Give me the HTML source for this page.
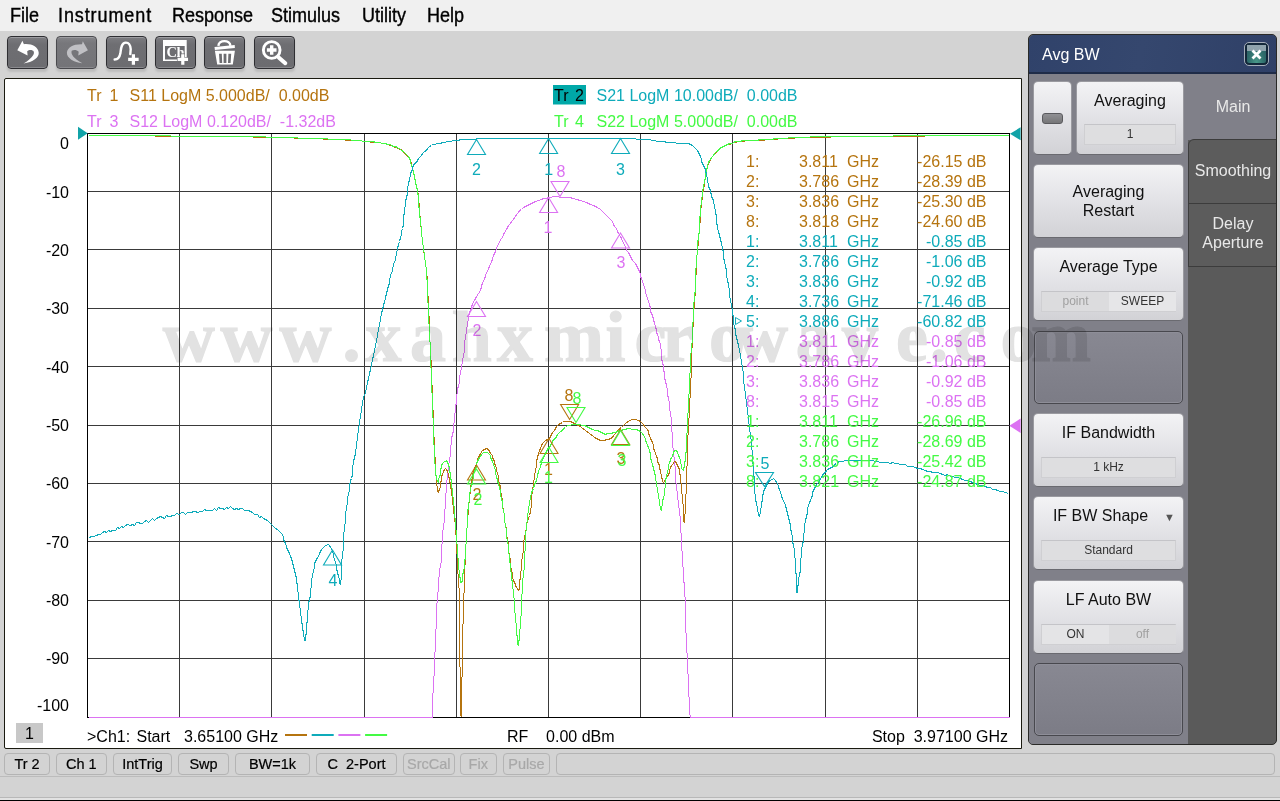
<!DOCTYPE html><html><head><meta charset="utf-8"><style>
*{margin:0;padding:0;box-sizing:border-box}
html,body{width:1280px;height:801px;overflow:hidden;background:#d3d3d3;font-family:"Liberation Sans",sans-serif;position:relative}
.abs{position:absolute}
#menu{left:0;top:0;width:1280px;height:31px;background:#f0f0f0}
#menu span{position:absolute;top:6px;font-size:18px;color:#000;line-height:20px;white-space:pre;-webkit-text-stroke:0.35px #000;transform:scaleY(1.08);transform-origin:0 17px}
.tb{position:absolute;top:36px;width:41px;height:33px;border:1px solid #2e2e32;border-radius:4px;background:linear-gradient(#7c7c80,#6e6e72 25%,#6c6c70);box-shadow:inset 0 1px 0 #9c9ca0,inset 0 -1px 0 #8a8a8e,0 3px 2px #bdbdbd}
.tb svg{position:absolute;left:0;top:0}
#chart{left:4px;top:78px;width:1018px;height:671px;background:#fff;border:1px solid #1a1a10;border-radius:2px 0 0 2px}
.hdr{position:absolute;font-size:16px;line-height:18px;white-space:pre}
.ylab{position:absolute;font-size:16px;line-height:18px;color:#000;text-align:right;width:40px;left:29px}
.mk{position:absolute;font-size:16px;line-height:18px;white-space:pre}
.sb{position:absolute;top:753px;height:22px;border:1px solid #b4b4b4;border-radius:4px;font-size:14.5px;line-height:20px;text-align:center;color:#000;background:#d3d3d3;-webkit-text-stroke:0.2px currentColor}
.sb.dis{color:#a8a8a8}
#panel{left:1028px;top:34px;width:249px;height:711px;border-radius:5px;background:#5a5a5a;border:1px solid #2a2a28;overflow:hidden}
#phead{position:absolute;left:0;top:0;width:249px;height:39px;background:linear-gradient(100deg,#30426a 0%,#35476e 45%,#2f4067 100%);border-bottom:2px solid #1f2c48;border-radius:5px 5px 0 0}
#pleft{position:absolute;left:0;top:39px;width:159px;height:672px;background:#808089}
.pb{position:absolute;left:5px;width:149px;height:72px;border-radius:4px;background:linear-gradient(#f3f3f5,#e2e2e6 50%,#d2d2d6);box-shadow:0 1px 0 #6a6a70,0 0 0 1px #9a9aa0;color:#111;text-align:center;font-size:16px;line-height:19px}
.pe{position:absolute;left:5px;width:149px;height:73px;border-radius:5px;background:linear-gradient(#888892,#7c7c86);border:1px solid #48484e;box-shadow:inset 0 0 0 1px #8e8e98}
.fld{position:absolute;left:7px;width:135px;height:21px;background:#dedee0;border:1px solid #cfcfd2;border-top-color:#c4c4c8;font-size:12px;line-height:19px;color:#333;text-align:center}
.tab{position:absolute;left:159px;width:90px;color:#e8e8e8;text-align:center;font-size:16px;line-height:19px}
</style></head><body>
<div id="menu" class="abs">
<span style="left:10px;">File</span>
<span style="left:58px;letter-spacing:0.9px;">Instrument</span>
<span style="left:172px;">Response</span>
<span style="left:271px;">Stimulus</span>
<span style="left:362px;">Utility</span>
<span style="left:427px;">Help</span>
</div>
<div class="tb" style="left:7px;"><svg width="41" height="33" viewBox="0 0 41 33" style="left:0;top:0;overflow:visible"><path d="M14.45 3.7 L9.3 13.2 L19.6 18.6 L19.2 14.25 C21 12.8 24.5 12.5 25.8 14.7 C26.8 17.5 23 22 15.5 26.6 C25 25 31.5 20.5 30.7 15.5 C30 10 24 6.5 15.9 7.2 Z" fill="#fff"/></svg></div>
<div class="tb" style="left:56px;background:linear-gradient(#848488,#77777b 20%,#747478);border-color:#4a4a4e"><svg width="41" height="33" viewBox="0 0 41 33" style="left:0;top:0;overflow:visible"><path d="M25.8 4.15 L30.9 13.2 L21.25 18.4 L21.7 14.65 C20 12.8 16.5 12.5 14.7 13.8 C13.5 17 16.5 21.5 25.4 26.2 C17 25.5 9.5 21 9.9 15.5 C10.5 10.5 16 7 25 7.2 Z" fill="#c0c0c4"/></svg></div>
<div class="tb" style="left:106px;"><svg width="41" height="33" viewBox="0 0 41 33" style="left:0;top:0;overflow:visible"><path d="M7.65 22.5 C11 22.5 12.5 21 13.4 16.3 C14 12 14 6 18.8 5.6 C23 5.5 23.5 9.5 23.7 12.2 L23.3 17.1" fill="none" stroke="#fff" stroke-width="2.4" stroke-linecap="round"/><path d="M24.8 17.2 h3.2 v3.65 h3.65 v3.2 h-3.65 v3.65 h-3.2 v-3.65 h-3.65 v-3.2 h3.65 z" fill="#fff"/></svg></div>
<div class="tb" style="left:155px;"><svg width="41" height="33" viewBox="0 0 41 33" style="left:0;top:0;overflow:visible"><path d="M7 3.1 H30.7 V24.1 H7 Z M9 8.9 V22.5 H28.7 V8.9 Z" fill="#fff" fill-rule="evenodd"/><text x="10.6" y="20.2" font-family="Liberation Serif" font-weight="bold" font-size="14.5" fill="#fff" letter-spacing="-0.6">Ch</text><path d="M25.2 17.2 h3.2 v3.65 h3.65 v3.2 h-3.65 v3.65 h-3.2 v-3.65 h-3.65 v-3.2 h3.65 z" fill="#fff" stroke="#6d6d71" stroke-width="1.2" paint-order="stroke"/></svg></div>
<div class="tb" style="left:204px;"><svg width="41" height="33" viewBox="0 0 41 33" style="left:0;top:0;overflow:visible"><path d="M13.4 8.9 C13.6 2.5 25.2 2.5 25.4 8.9" fill="none" stroke="#fff" stroke-width="2.4"/><path d="M9.5 10.1 L29.7 7.9 L29.9 11 L9.9 13 Z" fill="#fff"/><path d="M9.9 13.8 H29.9 L27.8 27.4 H12.2 Z M14 16.7 L14.6 26 H17.2 L16.8 16.7 Z M18.6 16.7 V26 H21.4 V16.7 Z M23.4 16.7 L23 26 H25.6 L26.2 16.7 Z" fill="#fff" fill-rule="evenodd"/></svg></div>
<div class="tb" style="left:254px;"><svg width="41" height="33" viewBox="0 0 41 33" style="left:0;top:0;overflow:visible"><circle cx="16.7" cy="13" r="8.35" fill="none" stroke="#fff" stroke-width="2.9"/><path d="M23.7 20.4 L30.3 26.2" stroke="#fff" stroke-width="4" stroke-linecap="round"/><path d="M16.7 8.2 V17.8 M11.9 13 H21.5" stroke="#fff" stroke-width="3.4" stroke-linecap="butt"/></svg></div>
<div id="chart" class="abs"></div>
<svg class="abs" style="left:0;top:0" width="1280" height="801" viewBox="0 0 1280 801">
<path d="M179.5 134V717M271.5 134V717M364.5 134V717M456.5 134V717M548.5 134V717M640.5 134V717M732.5 134V717M825.5 134V717M917.5 134V717M88 191.5H1009M88 249.5H1009M88 308.5H1009M88 366.5H1009M88 425.5H1009M88 483.5H1009M88 541.5H1009M88 600.5H1009M88 658.5H1009" stroke="#3a3a3a" stroke-width="1" fill="none"/>
<rect x="87.5" y="133.5" width="922" height="584" fill="none" stroke="#000" stroke-width="1"/>
<polyline points="88.5,717.5 432.5,717.5 432.5,717.5 432.5,712.5 432.5,705.5 432.5,697.5 433.5,688.5 433.5,680.5 434.5,672.5 434.5,664.5 434.5,656.5 435.5,647.5 435.5,639.5 435.5,632.5 436.5,625.5 436.5,618.5 436.5,611.5 436.5,605.5 437.5,600.5 437.5,594.5 438.5,589.5 438.5,583.5 438.5,579.5 439.5,574.5 439.5,570.5 440.5,565.5 441.5,560.5 441.5,554.5 441.5,547.5 442.5,540.5 442.5,533.5 443.5,526.5 444.5,520.5 444.5,512.5 445.5,505.5 445.5,497.5 446.5,489.5 446.5,482.5 447.5,477.5 447.5,472.5 448.5,468.5 448.5,464.5 449.5,461.5 449.5,458.5 450.5,455.5 450.5,451.5 450.5,447.5 451.5,442.5 451.5,438.5 452.5,434.5 453.5,430.5 453.5,425.5 454.5,420.5 454.5,415.5 455.5,410.5 455.5,406.5 456.5,402.5 456.5,398.5 456.5,395.5 457.5,392.5 457.5,389.5 458.5,385.5 459.5,382.5 459.5,377.5 460.5,372.5 461.5,367.5 462.5,361.5 463.5,355.5 464.5,350.5 464.5,343.5 465.5,337.5 466.5,330.5 467.5,324.5 468.5,317.5 469.5,312.5 471.5,307.5 472.5,303.5 474.5,300.5 476.5,296.5 478.5,293.5 480.5,290.5 481.5,286.5 482.5,282.5 484.5,279.5 485.5,275.5 486.5,272.5 488.5,269.5 489.5,265.5 491.5,262.5 492.5,258.5 493.5,255.5 495.5,251.5 496.5,248.5 497.5,245.5 499.5,242.5 500.5,239.5 502.5,237.5 503.5,234.5 504.5,232.5 506.5,229.5 507.5,227.5 508.5,225.5 510.5,223.5 511.5,221.5 513.5,219.5 514.5,217.5 515.5,216.5 516.5,214.5 518.5,212.5 519.5,210.5 521.5,209.5 523.5,207.5 525.5,206.5 527.5,205.5 529.5,204.5 531.5,203.5 533.5,202.5 535.5,201.5 538.5,200.5 541.5,199.5 543.5,198.5 546.5,198.5 548.5,197.5 550.5,197.5 553.5,196.5 554.5,196.5 557.5,196.5 560.5,197.5 562.5,197.5 566.5,197.5 569.5,197.5 573.5,198.5 576.5,199.5 580.5,200.5 583.5,201.5 586.5,202.5 590.5,204.5 593.5,205.5 597.5,207.5 600.5,209.5 602.5,211.5 604.5,213.5 606.5,215.5 608.5,217.5 610.5,219.5 612.5,221.5 613.5,224.5 614.5,226.5 616.5,228.5 617.5,231.5 618.5,233.5 620.5,236.5 621.5,238.5 622.5,241.5 624.5,244.5 625.5,247.5 626.5,250.5 628.5,252.5 629.5,254.5 630.5,256.5 631.5,258.5 632.5,260.5 634.5,262.5 635.5,263.5 636.5,265.5 637.5,267.5 638.5,269.5 639.5,271.5 640.5,274.5 640.5,276.5 641.5,278.5 642.5,281.5 643.5,284.5 644.5,287.5 645.5,290.5 645.5,292.5 646.5,295.5 647.5,298.5 648.5,301.5 649.5,304.5 650.5,308.5 650.5,311.5 652.5,315.5 653.5,319.5 654.5,323.5 655.5,326.5 656.5,330.5 656.5,332.5 657.5,334.5 658.5,337.5 658.5,339.5 659.5,341.5 660.5,344.5 660.5,347.5 661.5,350.5 661.5,354.5 661.5,358.5 662.5,362.5 663.5,366.5 663.5,369.5 664.5,373.5 664.5,377.5 665.5,381.5 666.5,385.5 667.5,390.5 667.5,394.5 668.5,398.5 669.5,403.5 669.5,408.5 670.5,413.5 671.5,420.5 671.5,427.5 672.5,435.5 672.5,443.5 673.5,452.5 674.5,461.5 675.5,470.5 675.5,478.5 676.5,486.5 677.5,495.5 678.5,503.5 679.5,511.5 680.5,520.5 680.5,528.5 681.5,537.5 681.5,546.5 682.5,554.5 682.5,562.5 683.5,570.5 683.5,575.5 683.5,580.5 684.5,584.5 684.5,588.5 684.5,593.5 685.5,600.5 685.5,608.5 685.5,617.5 685.5,627.5 686.5,637.5 686.5,647.5 687.5,658.5 687.5,668.5 688.5,679.5 688.5,691.5 689.5,702.5 689.5,711.5 690.5,717.5 1009.5,717.5" fill="none" stroke="#dc72f2" stroke-width="1.0" stroke-linejoin="round" shape-rendering="crispEdges" />
<polyline points="88.5,135.5 98.5,135.5 111.5,135.5 128.5,135.5 145.5,135.5 163.5,136.5 179.5,136.5 195.5,136.5 212.5,136.5 229.5,136.5 245.5,136.5 259.5,137.5 271.5,137.5 279.5,137.5 285.5,137.5 289.5,137.5 292.5,137.5 296.5,138.5 300.5,138.5 305.5,138.5 310.5,138.5 314.5,138.5 319.5,138.5 325.5,139.5 330.5,139.5 335.5,139.5 341.5,139.5 347.5,140.5 353.5,140.5 359.5,140.5 364.5,141.5 368.5,141.5 372.5,142.5 376.5,142.5 379.5,142.5 382.5,143.5 385.5,143.5 388.5,144.5 390.5,145.5 392.5,145.5 393.5,146.5 395.5,147.5 398.5,148.5 400.5,149.5 402.5,150.5 403.5,152.5 405.5,153.5 406.5,155.5 408.5,157.5 409.5,158.5 410.5,160.5 411.5,163.5 411.5,165.5 412.5,168.5 413.5,171.5 413.5,173.5 414.5,175.5 414.5,178.5 415.5,180.5 415.5,183.5 416.5,185.5 416.5,187.5 417.5,189.5 417.5,192.5 418.5,193.5 418.5,196.5 418.5,198.5 418.5,200.5 418.5,202.5 419.5,204.5 419.5,206.5 419.5,208.5 419.5,211.5 419.5,213.5 419.5,215.5 420.5,217.5 420.5,219.5 420.5,221.5 420.5,224.5 421.5,228.5 421.5,233.5 422.5,240.5 423.5,248.5 424.5,256.5 425.5,263.5 426.5,269.5 426.5,274.5 427.5,278.5 427.5,281.5 427.5,284.5 427.5,287.5 427.5,290.5 427.5,292.5 427.5,294.5 427.5,295.5 428.5,297.5 428.5,300.5 428.5,305.5 428.5,311.5 429.5,319.5 429.5,328.5 429.5,337.5 430.5,346.5 430.5,355.5 431.5,363.5 431.5,371.5 431.5,380.5 432.5,388.5 432.5,396.5 432.5,405.5 433.5,414.5 433.5,423.5 433.5,432.5 434.5,441.5 434.5,448.5 434.5,455.5 435.5,459.5 435.5,463.5 435.5,465.5 435.5,466.5 435.5,468.5 435.5,470.5 435.5,472.5 435.5,474.5 436.5,476.5 436.5,478.5 436.5,480.5 436.5,482.5 436.5,484.5 437.5,487.5 437.5,489.5 437.5,491.5 438.5,492.5 438.5,491.5 439.5,489.5 440.5,486.5 440.5,484.5 440.5,482.5 441.5,480.5 441.5,478.5 441.5,476.5 442.5,474.5 443.5,471.5 444.5,469.5 445.5,468.5 446.5,469.5 447.5,471.5 448.5,474.5 448.5,476.5 449.5,478.5 449.5,481.5 450.5,483.5 450.5,486.5 451.5,490.5 451.5,493.5 452.5,497.5 452.5,502.5 453.5,506.5 453.5,511.5 454.5,515.5 454.5,519.5 455.5,523.5 455.5,528.5 455.5,532.5 456.5,536.5 456.5,540.5 456.5,543.5 456.5,546.5 456.5,549.5 456.5,552.5 457.5,555.5 457.5,560.5 457.5,565.5 457.5,570.5 458.5,577.5 458.5,583.5 459.5,591.5 459.5,600.5 459.5,610.5 459.5,622.5 459.5,636.5 459.5,649.5 459.5,661.5 460.5,672.5 460.5,682.5 460.5,692.5 460.5,701.5 460.5,709.5 460.5,714.5 461.5,716.5 461.5,714.5 461.5,708.5 461.5,700.5 461.5,690.5 461.5,681.5 462.5,672.5 462.5,663.5 462.5,654.5 462.5,645.5 462.5,636.5 462.5,627.5 463.5,620.5 463.5,614.5 463.5,608.5 463.5,604.5 463.5,599.5 463.5,595.5 464.5,590.5 464.5,584.5 464.5,579.5 464.5,573.5 464.5,568.5 465.5,562.5 465.5,557.5 465.5,551.5 465.5,546.5 466.5,541.5 466.5,535.5 466.5,530.5 467.5,525.5 467.5,521.5 467.5,516.5 468.5,512.5 468.5,508.5 468.5,504.5 469.5,500.5 469.5,496.5 470.5,491.5 470.5,487.5 471.5,483.5 471.5,480.5 472.5,477.5 472.5,474.5 473.5,471.5 474.5,469.5 474.5,468.5 475.5,466.5 476.5,464.5 477.5,461.5 477.5,459.5 478.5,457.5 479.5,455.5 480.5,453.5 482.5,450.5 484.5,449.5 486.5,448.5 488.5,449.5 489.5,451.5 490.5,453.5 492.5,455.5 492.5,457.5 493.5,459.5 494.5,461.5 494.5,463.5 495.5,465.5 496.5,468.5 496.5,470.5 497.5,473.5 498.5,476.5 498.5,480.5 499.5,483.5 500.5,487.5 500.5,491.5 501.5,495.5 502.5,500.5 502.5,505.5 503.5,510.5 504.5,515.5 504.5,520.5 505.5,525.5 506.5,529.5 506.5,534.5 507.5,539.5 508.5,544.5 508.5,550.5 509.5,555.5 510.5,560.5 510.5,566.5 511.5,570.5 512.5,574.5 512.5,577.5 513.5,580.5 514.5,582.5 515.5,584.5 515.5,585.5 516.5,587.5 518.5,590.5 519.5,588.5 519.5,585.5 519.5,581.5 520.5,577.5 520.5,573.5 521.5,568.5 521.5,562.5 522.5,556.5 523.5,550.5 523.5,543.5 524.5,537.5 525.5,532.5 526.5,528.5 526.5,524.5 527.5,521.5 528.5,518.5 529.5,515.5 530.5,511.5 531.5,505.5 531.5,498.5 532.5,490.5 533.5,483.5 534.5,476.5 535.5,470.5 536.5,465.5 536.5,461.5 537.5,457.5 538.5,453.5 539.5,450.5 540.5,448.5 541.5,445.5 542.5,443.5 544.5,441.5 545.5,440.5 547.5,439.5 549.5,438.5 550.5,436.5 551.5,434.5 552.5,432.5 554.5,430.5 555.5,428.5 556.5,426.5 558.5,424.5 560.5,423.5 562.5,422.5 563.5,421.5 566.5,421.5 568.5,421.5 570.5,421.5 572.5,422.5 574.5,423.5 576.5,424.5 578.5,425.5 580.5,426.5 582.5,428.5 584.5,429.5 586.5,431.5 588.5,432.5 590.5,434.5 592.5,435.5 594.5,437.5 596.5,438.5 598.5,439.5 600.5,440.5 602.5,440.5 604.5,440.5 606.5,439.5 608.5,439.5 610.5,438.5 612.5,437.5 613.5,435.5 615.5,433.5 616.5,431.5 618.5,430.5 619.5,428.5 621.5,427.5 623.5,425.5 624.5,424.5 626.5,422.5 628.5,421.5 631.5,419.5 633.5,419.5 635.5,419.5 638.5,420.5 640.5,421.5 641.5,422.5 643.5,424.5 644.5,426.5 646.5,428.5 647.5,429.5 648.5,431.5 648.5,433.5 649.5,435.5 650.5,438.5 651.5,440.5 652.5,442.5 653.5,445.5 653.5,448.5 654.5,450.5 655.5,453.5 656.5,456.5 657.5,458.5 657.5,461.5 658.5,463.5 659.5,465.5 659.5,468.5 660.5,470.5 660.5,472.5 661.5,475.5 661.5,477.5 662.5,479.5 662.5,481.5 663.5,482.5 664.5,481.5 665.5,479.5 667.5,476.5 668.5,474.5 669.5,472.5 669.5,470.5 670.5,467.5 671.5,465.5 672.5,464.5 674.5,461.5 676.5,462.5 676.5,463.5 677.5,465.5 678.5,467.5 679.5,469.5 679.5,472.5 680.5,476.5 680.5,480.5 681.5,485.5 681.5,491.5 682.5,496.5 682.5,501.5 683.5,506.5 683.5,510.5 683.5,514.5 683.5,518.5 683.5,521.5 684.5,522.5 684.5,522.5 684.5,520.5 684.5,516.5 685.5,511.5 685.5,504.5 685.5,497.5 686.5,490.5 686.5,481.5 686.5,471.5 687.5,460.5 687.5,449.5 687.5,439.5 688.5,430.5 688.5,422.5 689.5,414.5 689.5,407.5 689.5,401.5 690.5,395.5 690.5,390.5 690.5,385.5 690.5,382.5 690.5,379.5 691.5,376.5 691.5,373.5 691.5,370.5 691.5,365.5 691.5,361.5 691.5,355.5 691.5,350.5 692.5,345.5 692.5,340.5 692.5,335.5 692.5,329.5 693.5,324.5 693.5,319.5 693.5,314.5 693.5,310.5 694.5,306.5 694.5,303.5 694.5,300.5 694.5,297.5 695.5,294.5 695.5,290.5 695.5,284.5 695.5,278.5 696.5,271.5 696.5,264.5 696.5,258.5 697.5,252.5 697.5,247.5 698.5,243.5 698.5,239.5 698.5,235.5 699.5,231.5 699.5,228.5 699.5,224.5 700.5,221.5 700.5,218.5 700.5,215.5 700.5,212.5 700.5,209.5 701.5,206.5 701.5,203.5 701.5,201.5 702.5,198.5 702.5,195.5 702.5,193.5 703.5,190.5 703.5,188.5 704.5,185.5 704.5,183.5 704.5,180.5 705.5,178.5 705.5,176.5 706.5,173.5 706.5,171.5 706.5,169.5 707.5,167.5 707.5,165.5 708.5,163.5 709.5,161.5 710.5,159.5 711.5,157.5 713.5,155.5 714.5,154.5 716.5,152.5 718.5,150.5 719.5,149.5 721.5,147.5 723.5,146.5 725.5,145.5 727.5,144.5 729.5,144.5 732.5,143.5 733.5,142.5 735.5,142.5 737.5,141.5 740.5,141.5 742.5,141.5 746.5,140.5 749.5,140.5 753.5,140.5 756.5,140.5 760.5,140.5 763.5,140.5 766.5,139.5 768.5,139.5 771.5,139.5 775.5,139.5 780.5,138.5 785.5,138.5 791.5,138.5 798.5,137.5 805.5,137.5 814.5,137.5 825.5,137.5 837.5,136.5 852.5,136.5 868.5,136.5 884.5,136.5 901.5,136.5 917.5,136.5 933.5,135.5 951.5,135.5 968.5,135.5 984.5,135.5 998.5,135.5 1008.5,135.5" fill="none" stroke="#b5740f" stroke-width="1.0" stroke-linejoin="round" shape-rendering="crispEdges" />
<polyline points="88.5,135.5 97.5,135.5 111.5,135.5 127.5,135.5 145.5,135.5 162.5,135.5 179.5,136.5 195.5,136.5 211.5,136.5 228.5,136.5 244.5,136.5 259.5,136.5 271.5,137.5 279.5,137.5 285.5,137.5 289.5,137.5 292.5,137.5 295.5,137.5 300.5,138.5 304.5,138.5 309.5,138.5 314.5,138.5 319.5,138.5 324.5,138.5 330.5,139.5 335.5,139.5 341.5,139.5 347.5,139.5 353.5,140.5 359.5,140.5 364.5,141.5 368.5,141.5 372.5,141.5 376.5,142.5 379.5,142.5 382.5,143.5 385.5,143.5 387.5,144.5 390.5,144.5 391.5,145.5 393.5,146.5 395.5,146.5 397.5,147.5 400.5,149.5 401.5,150.5 403.5,151.5 405.5,153.5 406.5,154.5 408.5,156.5 409.5,158.5 410.5,160.5 410.5,162.5 411.5,165.5 412.5,168.5 413.5,171.5 413.5,173.5 414.5,175.5 414.5,178.5 415.5,180.5 415.5,183.5 416.5,185.5 416.5,187.5 417.5,189.5 417.5,191.5 417.5,193.5 418.5,195.5 418.5,197.5 418.5,200.5 418.5,202.5 418.5,204.5 418.5,206.5 419.5,208.5 419.5,210.5 419.5,213.5 419.5,215.5 419.5,216.5 420.5,218.5 420.5,220.5 420.5,223.5 421.5,228.5 421.5,233.5 422.5,240.5 423.5,248.5 424.5,255.5 425.5,263.5 426.5,269.5 426.5,273.5 426.5,277.5 427.5,281.5 427.5,284.5 427.5,287.5 427.5,290.5 427.5,292.5 427.5,294.5 427.5,295.5 427.5,297.5 427.5,300.5 428.5,305.5 428.5,311.5 428.5,319.5 429.5,327.5 429.5,337.5 430.5,346.5 430.5,355.5 430.5,363.5 431.5,371.5 431.5,380.5 431.5,388.5 432.5,396.5 432.5,405.5 432.5,413.5 433.5,422.5 433.5,432.5 433.5,440.5 434.5,448.5 434.5,455.5 434.5,459.5 434.5,462.5 435.5,465.5 435.5,466.5 435.5,468.5 435.5,470.5 435.5,472.5 435.5,474.5 436.5,476.5 436.5,478.5 437.5,481.5 438.5,482.5 438.5,481.5 438.5,479.5 439.5,476.5 440.5,474.5 440.5,472.5 440.5,469.5 441.5,467.5 441.5,465.5 442.5,463.5 443.5,462.5 446.5,460.5 446.5,460.5 447.5,462.5 448.5,464.5 449.5,468.5 449.5,470.5 450.5,474.5 450.5,477.5 451.5,481.5 451.5,485.5 452.5,490.5 452.5,494.5 453.5,499.5 453.5,503.5 454.5,508.5 454.5,514.5 455.5,520.5 455.5,526.5 456.5,533.5 456.5,540.5 457.5,547.5 457.5,554.5 458.5,560.5 458.5,564.5 458.5,568.5 459.5,571.5 459.5,573.5 459.5,576.5 460.5,578.5 460.5,582.5 462.5,581.5 462.5,579.5 462.5,575.5 463.5,571.5 464.5,566.5 464.5,561.5 465.5,557.5 465.5,552.5 465.5,546.5 466.5,541.5 466.5,535.5 466.5,530.5 467.5,525.5 467.5,520.5 467.5,516.5 467.5,511.5 468.5,507.5 468.5,503.5 469.5,500.5 469.5,496.5 469.5,493.5 470.5,490.5 470.5,488.5 471.5,485.5 472.5,483.5 472.5,480.5 473.5,477.5 473.5,474.5 474.5,471.5 475.5,468.5 476.5,466.5 476.5,463.5 477.5,461.5 478.5,459.5 479.5,457.5 480.5,456.5 481.5,454.5 483.5,452.5 485.5,452.5 487.5,452.5 490.5,455.5 490.5,457.5 491.5,459.5 492.5,461.5 493.5,464.5 494.5,467.5 495.5,470.5 495.5,473.5 496.5,476.5 497.5,480.5 498.5,484.5 499.5,487.5 500.5,491.5 500.5,495.5 501.5,498.5 502.5,502.5 502.5,506.5 503.5,510.5 504.5,515.5 504.5,519.5 505.5,525.5 506.5,530.5 506.5,536.5 507.5,541.5 508.5,546.5 508.5,551.5 509.5,556.5 509.5,560.5 510.5,565.5 510.5,569.5 511.5,574.5 511.5,578.5 512.5,582.5 512.5,586.5 513.5,591.5 513.5,595.5 514.5,600.5 514.5,604.5 514.5,610.5 515.5,615.5 515.5,620.5 516.5,625.5 516.5,630.5 516.5,633.5 517.5,637.5 517.5,641.5 517.5,644.5 518.5,645.5 518.5,645.5 518.5,642.5 519.5,638.5 519.5,632.5 520.5,626.5 520.5,619.5 521.5,613.5 521.5,606.5 521.5,598.5 522.5,590.5 522.5,582.5 523.5,574.5 524.5,565.5 524.5,556.5 525.5,546.5 525.5,536.5 526.5,526.5 527.5,517.5 528.5,509.5 529.5,503.5 530.5,497.5 531.5,492.5 533.5,488.5 534.5,484.5 536.5,480.5 537.5,475.5 538.5,471.5 540.5,466.5 541.5,462.5 542.5,459.5 544.5,456.5 545.5,453.5 546.5,451.5 547.5,449.5 547.5,448.5 549.5,447.5 550.5,445.5 551.5,443.5 552.5,441.5 553.5,439.5 555.5,438.5 556.5,436.5 557.5,434.5 559.5,432.5 560.5,431.5 562.5,430.5 563.5,428.5 565.5,427.5 567.5,425.5 570.5,425.5 571.5,424.5 573.5,424.5 575.5,424.5 577.5,424.5 579.5,424.5 582.5,425.5 584.5,425.5 586.5,426.5 588.5,427.5 590.5,428.5 592.5,429.5 595.5,430.5 597.5,430.5 599.5,431.5 601.5,432.5 603.5,433.5 605.5,434.5 607.5,433.5 609.5,433.5 611.5,433.5 613.5,432.5 615.5,432.5 617.5,431.5 619.5,430.5 621.5,430.5 623.5,429.5 625.5,429.5 627.5,428.5 629.5,428.5 632.5,429.5 634.5,429.5 636.5,429.5 638.5,430.5 640.5,431.5 641.5,432.5 642.5,433.5 643.5,435.5 645.5,438.5 645.5,440.5 646.5,442.5 647.5,445.5 648.5,447.5 649.5,450.5 650.5,454.5 650.5,457.5 651.5,461.5 652.5,464.5 653.5,468.5 654.5,472.5 655.5,476.5 655.5,479.5 656.5,482.5 656.5,485.5 657.5,488.5 657.5,491.5 658.5,494.5 658.5,497.5 659.5,500.5 659.5,504.5 660.5,507.5 660.5,509.5 661.5,510.5 661.5,509.5 661.5,507.5 662.5,504.5 662.5,501.5 663.5,497.5 664.5,494.5 664.5,490.5 665.5,485.5 665.5,480.5 666.5,476.5 667.5,471.5 668.5,468.5 668.5,465.5 669.5,462.5 670.5,460.5 670.5,459.5 671.5,457.5 672.5,456.5 673.5,452.5 674.5,450.5 676.5,450.5 676.5,450.5 677.5,452.5 678.5,455.5 679.5,457.5 680.5,460.5 680.5,462.5 681.5,465.5 681.5,468.5 682.5,469.5 683.5,470.5 683.5,468.5 684.5,466.5 684.5,463.5 685.5,459.5 685.5,454.5 686.5,450.5 686.5,444.5 686.5,437.5 687.5,429.5 687.5,421.5 687.5,415.5 688.5,410.5 688.5,406.5 688.5,404.5 688.5,404.5 688.5,402.5 688.5,400.5 688.5,396.5 689.5,391.5 689.5,386.5 689.5,380.5 689.5,375.5 690.5,370.5 690.5,365.5 690.5,360.5 690.5,355.5 691.5,350.5 691.5,345.5 692.5,340.5 692.5,334.5 692.5,329.5 692.5,324.5 693.5,319.5 693.5,314.5 693.5,310.5 693.5,306.5 693.5,303.5 694.5,300.5 694.5,297.5 694.5,294.5 695.5,290.5 695.5,284.5 695.5,278.5 695.5,271.5 696.5,264.5 696.5,257.5 697.5,252.5 697.5,247.5 697.5,242.5 698.5,238.5 698.5,235.5 699.5,231.5 699.5,228.5 699.5,224.5 699.5,221.5 699.5,218.5 700.5,214.5 700.5,211.5 700.5,209.5 700.5,206.5 701.5,203.5 701.5,200.5 701.5,198.5 702.5,195.5 702.5,193.5 702.5,190.5 703.5,187.5 703.5,185.5 704.5,182.5 704.5,180.5 705.5,178.5 705.5,175.5 705.5,173.5 706.5,171.5 706.5,169.5 707.5,167.5 707.5,165.5 708.5,162.5 709.5,160.5 710.5,159.5 711.5,157.5 713.5,155.5 714.5,153.5 716.5,151.5 718.5,150.5 719.5,148.5 721.5,147.5 723.5,146.5 725.5,145.5 727.5,144.5 729.5,143.5 732.5,143.5 733.5,142.5 735.5,141.5 737.5,141.5 740.5,141.5 742.5,140.5 745.5,140.5 749.5,140.5 752.5,140.5 756.5,140.5 760.5,139.5 763.5,139.5 765.5,139.5 768.5,139.5 771.5,139.5 775.5,138.5 780.5,138.5 785.5,138.5 791.5,137.5 798.5,137.5 805.5,137.5 814.5,136.5 825.5,136.5 837.5,136.5 852.5,136.5 868.5,136.5 884.5,136.5 901.5,135.5 917.5,135.5 933.5,135.5 950.5,135.5 968.5,135.5 984.5,135.5 998.5,135.5 1008.5,135.5" fill="none" stroke="#44fa44" stroke-width="1.0" stroke-linejoin="round" shape-rendering="crispEdges" />
<polyline points="88.5,538.5 89.5,537.5 91.5,536.5 93.5,536.5 96.5,535.5 98.5,534.5 100.5,534.5 102.5,532.5 104.5,531.5 106.5,532.5 108.5,530.5 110.5,531.5 112.5,530.5 115.5,530.5 117.5,527.5 119.5,528.5 121.5,526.5 123.5,527.5 125.5,525.5 127.5,524.5 130.5,525.5 132.5,524.5 134.5,525.5 136.5,522.5 138.5,522.5 140.5,523.5 142.5,523.5 144.5,521.5 146.5,520.5 148.5,522.5 150.5,520.5 152.5,518.5 154.5,520.5 156.5,518.5 158.5,517.5 160.5,516.5 162.5,517.5 164.5,518.5 166.5,515.5 168.5,516.5 170.5,516.5 172.5,515.5 174.5,515.5 176.5,513.5 179.5,514.5 181.5,512.5 183.5,512.5 185.5,514.5 187.5,512.5 189.5,512.5 191.5,512.5 193.5,511.5 195.5,511.5 197.5,512.5 200.5,511.5 202.5,511.5 204.5,509.5 206.5,510.5 208.5,510.5 210.5,510.5 212.5,510.5 214.5,508.5 216.5,510.5 218.5,507.5 220.5,508.5 222.5,508.5 224.5,509.5 226.5,507.5 228.5,508.5 230.5,506.5 232.5,508.5 234.5,509.5 236.5,508.5 238.5,509.5 240.5,508.5 242.5,508.5 244.5,510.5 246.5,510.5 248.5,510.5 250.5,511.5 252.5,512.5 254.5,514.5 257.5,514.5 259.5,517.5 261.5,516.5 263.5,518.5 265.5,519.5 267.5,520.5 269.5,522.5 271.5,524.5 272.5,525.5 273.5,526.5 275.5,528.5 277.5,529.5 279.5,531.5 281.5,533.5 282.5,534.5 283.5,537.5 283.5,539.5 284.5,541.5 285.5,543.5 286.5,546.5 286.5,547.5 287.5,549.5 288.5,551.5 289.5,553.5 290.5,556.5 291.5,558.5 292.5,562.5 293.5,566.5 294.5,570.5 295.5,574.5 296.5,578.5 296.5,581.5 297.5,585.5 297.5,589.5 298.5,594.5 298.5,598.5 299.5,602.5 299.5,605.5 300.5,610.5 300.5,614.5 301.5,617.5 301.5,621.5 302.5,625.5 302.5,628.5 303.5,632.5 303.5,635.5 304.5,638.5 304.5,640.5 305.5,640.5 305.5,639.5 305.5,636.5 306.5,632.5 306.5,628.5 306.5,624.5 307.5,620.5 307.5,616.5 307.5,612.5 308.5,607.5 308.5,603.5 309.5,599.5 310.5,595.5 310.5,590.5 311.5,585.5 311.5,580.5 312.5,575.5 313.5,570.5 314.5,567.5 314.5,563.5 315.5,561.5 316.5,559.5 317.5,557.5 318.5,556.5 319.5,553.5 320.5,551.5 321.5,549.5 323.5,547.5 325.5,545.5 328.5,544.5 329.5,545.5 330.5,547.5 332.5,550.5 332.5,551.5 333.5,554.5 333.5,556.5 334.5,559.5 335.5,562.5 336.5,565.5 336.5,568.5 337.5,572.5 338.5,576.5 339.5,579.5 339.5,582.5 340.5,584.5 340.5,583.5 340.5,583.5 340.5,581.5 341.5,578.5 341.5,574.5 341.5,570.5 341.5,563.5 342.5,555.5 343.5,546.5 343.5,536.5 344.5,527.5 345.5,520.5 345.5,513.5 346.5,508.5 347.5,502.5 347.5,498.5 348.5,493.5 349.5,490.5 349.5,486.5 349.5,484.5 350.5,482.5 350.5,480.5 351.5,478.5 352.5,474.5 352.5,468.5 353.5,461.5 355.5,453.5 356.5,445.5 357.5,437.5 358.5,429.5 359.5,422.5 360.5,416.5 361.5,409.5 362.5,403.5 363.5,397.5 365.5,392.5 366.5,387.5 367.5,382.5 368.5,378.5 369.5,373.5 370.5,369.5 371.5,364.5 372.5,359.5 373.5,355.5 374.5,350.5 375.5,345.5 376.5,340.5 377.5,335.5 378.5,329.5 379.5,324.5 380.5,319.5 381.5,313.5 382.5,309.5 383.5,305.5 384.5,301.5 385.5,298.5 385.5,296.5 386.5,294.5 386.5,292.5 387.5,290.5 387.5,288.5 388.5,286.5 388.5,285.5 389.5,283.5 389.5,280.5 390.5,275.5 392.5,270.5 393.5,264.5 395.5,259.5 396.5,253.5 397.5,248.5 398.5,244.5 399.5,241.5 400.5,237.5 401.5,234.5 401.5,231.5 402.5,228.5 403.5,224.5 403.5,220.5 403.5,216.5 404.5,212.5 404.5,208.5 405.5,205.5 405.5,202.5 405.5,200.5 406.5,198.5 406.5,196.5 407.5,194.5 407.5,192.5 407.5,189.5 407.5,187.5 408.5,184.5 408.5,182.5 409.5,180.5 409.5,178.5 410.5,175.5 410.5,173.5 411.5,171.5 412.5,169.5 412.5,167.5 413.5,165.5 414.5,163.5 416.5,162.5 417.5,160.5 418.5,158.5 420.5,156.5 421.5,155.5 422.5,153.5 424.5,151.5 426.5,150.5 427.5,148.5 429.5,146.5 431.5,145.5 432.5,144.5 434.5,144.5 437.5,143.5 440.5,143.5 442.5,142.5 444.5,142.5 447.5,141.5 450.5,141.5 453.5,140.5 456.5,140.5 458.5,140.5 460.5,139.5 462.5,139.5 464.5,139.5 466.5,139.5 470.5,139.5 473.5,139.5 478.5,138.5 482.5,138.5 488.5,138.5 493.5,138.5 500.5,138.5 507.5,138.5 515.5,138.5 523.5,138.5 532.5,138.5 540.5,138.5 548.5,138.5 553.5,138.5 558.5,138.5 563.5,138.5 567.5,138.5 573.5,138.5 580.5,138.5 588.5,138.5 599.5,138.5 610.5,138.5 621.5,138.5 631.5,138.5 640.5,139.5 645.5,139.5 649.5,139.5 652.5,140.5 654.5,140.5 657.5,141.5 660.5,141.5 663.5,141.5 667.5,142.5 670.5,142.5 674.5,142.5 677.5,143.5 680.5,143.5 682.5,143.5 684.5,143.5 686.5,143.5 688.5,143.5 690.5,144.5 692.5,145.5 693.5,146.5 695.5,148.5 697.5,150.5 698.5,152.5 699.5,154.5 700.5,156.5 701.5,159.5 701.5,161.5 702.5,163.5 703.5,165.5 704.5,167.5 705.5,169.5 705.5,171.5 706.5,173.5 706.5,175.5 707.5,178.5 707.5,179.5 707.5,181.5 708.5,184.5 708.5,186.5 709.5,188.5 710.5,190.5 710.5,192.5 711.5,194.5 711.5,196.5 712.5,198.5 713.5,200.5 713.5,202.5 714.5,205.5 714.5,207.5 715.5,210.5 715.5,213.5 716.5,215.5 716.5,217.5 716.5,219.5 716.5,221.5 716.5,223.5 717.5,225.5 717.5,228.5 718.5,231.5 719.5,235.5 720.5,239.5 721.5,243.5 722.5,248.5 723.5,252.5 723.5,257.5 724.5,261.5 725.5,266.5 726.5,270.5 726.5,275.5 727.5,280.5 728.5,284.5 729.5,290.5 729.5,295.5 730.5,300.5 731.5,305.5 732.5,310.5 732.5,313.5 733.5,317.5 733.5,320.5 733.5,323.5 734.5,326.5 735.5,330.5 735.5,333.5 736.5,337.5 737.5,341.5 738.5,345.5 739.5,350.5 740.5,355.5 741.5,361.5 742.5,367.5 743.5,373.5 743.5,380.5 744.5,387.5 745.5,394.5 746.5,402.5 747.5,410.5 748.5,419.5 749.5,427.5 750.5,435.5 751.5,442.5 751.5,447.5 752.5,452.5 752.5,457.5 752.5,461.5 753.5,465.5 753.5,470.5 753.5,474.5 754.5,478.5 754.5,482.5 754.5,486.5 754.5,489.5 754.5,492.5 755.5,495.5 755.5,497.5 755.5,498.5 755.5,500.5 756.5,502.5 756.5,504.5 757.5,507.5 757.5,510.5 758.5,513.5 758.5,515.5 759.5,516.5 759.5,515.5 760.5,512.5 760.5,509.5 761.5,506.5 761.5,502.5 762.5,500.5 762.5,497.5 762.5,495.5 763.5,493.5 763.5,491.5 764.5,489.5 765.5,487.5 766.5,485.5 767.5,483.5 768.5,481.5 770.5,480.5 773.5,478.5 774.5,479.5 775.5,480.5 776.5,482.5 778.5,485.5 778.5,487.5 779.5,489.5 780.5,492.5 781.5,495.5 782.5,499.5 784.5,502.5 785.5,505.5 786.5,509.5 787.5,513.5 788.5,517.5 789.5,521.5 790.5,525.5 790.5,528.5 791.5,532.5 792.5,537.5 792.5,541.5 793.5,545.5 794.5,550.5 794.5,554.5 795.5,560.5 795.5,565.5 795.5,571.5 796.5,575.5 796.5,580.5 796.5,583.5 796.5,586.5 796.5,589.5 796.5,591.5 796.5,592.5 797.5,592.5 797.5,590.5 797.5,587.5 798.5,583.5 798.5,579.5 799.5,574.5 800.5,570.5 800.5,565.5 800.5,560.5 801.5,555.5 801.5,550.5 802.5,544.5 803.5,540.5 803.5,535.5 804.5,530.5 804.5,525.5 805.5,520.5 806.5,516.5 807.5,512.5 807.5,508.5 808.5,505.5 809.5,502.5 810.5,500.5 811.5,497.5 812.5,495.5 812.5,492.5 813.5,490.5 814.5,488.5 815.5,486.5 816.5,484.5 818.5,482.5 819.5,480.5 820.5,478.5 821.5,477.5 822.5,475.5 823.5,473.5 825.5,472.5 826.5,470.5 827.5,469.5 829.5,468.5 831.5,467.5 833.5,466.5 834.5,464.5 836.5,463.5 837.5,462.5 839.5,461.5 842.5,461.5 845.5,460.5 848.5,460.5 853.5,460.5 858.5,460.5 862.5,460.5 866.5,460.5 870.5,460.5 872.5,460.5 875.5,461.5 877.5,461.5 880.5,462.5 882.5,462.5 885.5,462.5 887.5,462.5 890.5,463.5 892.5,462.5 895.5,463.5 897.5,463.5 900.5,464.5 902.5,464.5 905.5,464.5 907.5,466.5 910.5,466.5 912.5,466.5 915.5,467.5 917.5,468.5 920.5,468.5 922.5,469.5 925.5,470.5 927.5,471.5 930.5,471.5 932.5,472.5 935.5,472.5 937.5,472.5 940.5,473.5 942.5,474.5 945.5,475.5 947.5,474.5 950.5,476.5 952.5,476.5 955.5,477.5 957.5,477.5 960.5,478.5 962.5,479.5 965.5,480.5 967.5,480.5 970.5,481.5 972.5,482.5 975.5,483.5 977.5,484.5 980.5,485.5 982.5,485.5 985.5,486.5 987.5,487.5 990.5,487.5 992.5,489.5 995.5,489.5 997.5,490.5 1000.5,491.5 1002.5,491.5 1005.5,492.5 1008.5,493.5" fill="none" stroke="#0eabba" stroke-width="1.0" stroke-linejoin="round" shape-rendering="crispEdges" />
<path d="M476.5 139.5L467.5 154.5H485.5Z" fill="none" stroke="#0eabba" stroke-width="1.1"/>
<text x="476.5" y="175" fill="#0eabba" font-size="16" text-anchor="middle">2</text>
<path d="M548.6 138.5L539.6 153.5H557.6Z" fill="none" stroke="#0eabba" stroke-width="1.1"/>
<text x="548.6" y="175" fill="#0eabba" font-size="16" text-anchor="middle">1</text>
<path d="M620.5 138.5L611.5 153.5H629.5Z" fill="none" stroke="#0eabba" stroke-width="1.1"/>
<text x="620.5" y="175" fill="#0eabba" font-size="16" text-anchor="middle">3</text>
<path d="M332.5 550L323.5 565H341.5Z" fill="none" stroke="#0eabba" stroke-width="1.1"/>
<text x="333" y="586" fill="#0eabba" font-size="16" text-anchor="middle">4</text>
<path d="M755.5 472.5H773.5L764.5 486.5Z" fill="none" stroke="#0eabba" stroke-width="1.1"/>
<text x="765" y="469" fill="#0eabba" font-size="16" text-anchor="middle">5</text>
<path d="M548.6 197.5L539.6 212.5H557.6Z" fill="none" stroke="#dc72f2" stroke-width="1.1"/>
<text x="548" y="233" fill="#dc72f2" font-size="16" text-anchor="middle">1</text>
<path d="M551.0 181.5H569.0L560 196.5Z" fill="none" stroke="#dc72f2" stroke-width="1.1"/>
<text x="561" y="177" fill="#dc72f2" font-size="16" text-anchor="middle">8</text>
<path d="M476.5 301.5L467.5 316.5H485.5Z" fill="none" stroke="#dc72f2" stroke-width="1.1"/>
<text x="477" y="336" fill="#dc72f2" font-size="16" text-anchor="middle">2</text>
<path d="M620.5 233L611.5 248H629.5Z" fill="none" stroke="#dc72f2" stroke-width="1.1"/>
<text x="621" y="268" fill="#dc72f2" font-size="16" text-anchor="middle">3</text>
<path d="M476.5 465L467.5 480H485.5Z" fill="none" stroke="#b5740f" stroke-width="1.1"/>
<text x="477" y="499.5" fill="#b5740f" font-size="16" text-anchor="middle">2</text>
<path d="M549 438.5L540.0 453.5H558.0Z" fill="none" stroke="#b5740f" stroke-width="1.1"/>
<text x="548.5" y="475" fill="#b5740f" font-size="16" text-anchor="middle">1</text>
<path d="M620.6 429.5L611.6 444.5H629.6Z" fill="none" stroke="#b5740f" stroke-width="1.1"/>
<text x="621" y="464" fill="#b5740f" font-size="16" text-anchor="middle">3</text>
<path d="M560.6 404.5H578.6L569.6 419.5Z" fill="none" stroke="#b5740f" stroke-width="1.1"/>
<text x="569" y="401" fill="#b5740f" font-size="16" text-anchor="middle">8</text>
<path d="M476.5 469L467.5 484H485.5Z" fill="none" stroke="#44fa44" stroke-width="1.1"/>
<text x="478" y="505" fill="#44fa44" font-size="16" text-anchor="middle">2</text>
<path d="M549 447.5L540.0 462.5H558.0Z" fill="none" stroke="#44fa44" stroke-width="1.1"/>
<text x="548.5" y="483" fill="#44fa44" font-size="16" text-anchor="middle">1</text>
<path d="M620.6 430.5L611.6 445.5H629.6Z" fill="none" stroke="#44fa44" stroke-width="1.1"/>
<text x="622" y="466" fill="#44fa44" font-size="16" text-anchor="middle">3</text>
<path d="M567.0 407.5H585.0L576 422.5Z" fill="none" stroke="#44fa44" stroke-width="1.1"/>
<text x="577" y="404" fill="#44fa44" font-size="16" text-anchor="middle">8</text>
<path d="M78 126.8L87.7 133.3L78 139.8Z" fill="#11a3a8"/>
<path d="M1020.6 127.3L1010 133.8L1020.6 140.2Z" fill="#11a3a8"/>
<path d="M1020.6 418.5L1009.3 425.8L1020.6 433Z" fill="#dc72f2"/>
<path d="M735.5 317.5L741.5 321L735.5 324.5Z" fill="none" stroke="#0eabba" stroke-width="1"/>
<text x="746" y="167" fill="#b5740f" font-size="16">1:</text>
<text x="799" y="167" fill="#b5740f" font-size="16">3.811</text>
<text x="847" y="167" fill="#b5740f" font-size="16">GHz</text>
<text x="986.5" y="167" fill="#b5740f" font-size="16" text-anchor="end">-26.15 dB</text>
<text x="746" y="187" fill="#b5740f" font-size="16">2:</text>
<text x="799" y="187" fill="#b5740f" font-size="16">3.786</text>
<text x="847" y="187" fill="#b5740f" font-size="16">GHz</text>
<text x="986.5" y="187" fill="#b5740f" font-size="16" text-anchor="end">-28.39 dB</text>
<text x="746" y="207" fill="#b5740f" font-size="16">3:</text>
<text x="799" y="207" fill="#b5740f" font-size="16">3.836</text>
<text x="847" y="207" fill="#b5740f" font-size="16">GHz</text>
<text x="986.5" y="207" fill="#b5740f" font-size="16" text-anchor="end">-25.30 dB</text>
<text x="746" y="227" fill="#b5740f" font-size="16">8:</text>
<text x="799" y="227" fill="#b5740f" font-size="16">3.818</text>
<text x="847" y="227" fill="#b5740f" font-size="16">GHz</text>
<text x="986.5" y="227" fill="#b5740f" font-size="16" text-anchor="end">-24.60 dB</text>
<text x="746" y="247" fill="#0eabba" font-size="16">1:</text>
<text x="799" y="247" fill="#0eabba" font-size="16">3.811</text>
<text x="847" y="247" fill="#0eabba" font-size="16">GHz</text>
<text x="986.5" y="247" fill="#0eabba" font-size="16" text-anchor="end">-0.85 dB</text>
<text x="746" y="267" fill="#0eabba" font-size="16">2:</text>
<text x="799" y="267" fill="#0eabba" font-size="16">3.786</text>
<text x="847" y="267" fill="#0eabba" font-size="16">GHz</text>
<text x="986.5" y="267" fill="#0eabba" font-size="16" text-anchor="end">-1.06 dB</text>
<text x="746" y="287" fill="#0eabba" font-size="16">3:</text>
<text x="799" y="287" fill="#0eabba" font-size="16">3.836</text>
<text x="847" y="287" fill="#0eabba" font-size="16">GHz</text>
<text x="986.5" y="287" fill="#0eabba" font-size="16" text-anchor="end">-0.92 dB</text>
<text x="746" y="307" fill="#0eabba" font-size="16">4:</text>
<text x="799" y="307" fill="#0eabba" font-size="16">3.736</text>
<text x="847" y="307" fill="#0eabba" font-size="16">GHz</text>
<text x="986.5" y="307" fill="#0eabba" font-size="16" text-anchor="end">-71.46 dB</text>
<text x="746" y="327" fill="#0eabba" font-size="16">5:</text>
<text x="799" y="327" fill="#0eabba" font-size="16">3.886</text>
<text x="847" y="327" fill="#0eabba" font-size="16">GHz</text>
<text x="986.5" y="327" fill="#0eabba" font-size="16" text-anchor="end">-60.82 dB</text>
<text x="746" y="347" fill="#dc72f2" font-size="16">1:</text>
<text x="799" y="347" fill="#dc72f2" font-size="16">3.811</text>
<text x="847" y="347" fill="#dc72f2" font-size="16">GHz</text>
<text x="986.5" y="347" fill="#dc72f2" font-size="16" text-anchor="end">-0.85 dB</text>
<text x="746" y="367" fill="#dc72f2" font-size="16">2:</text>
<text x="799" y="367" fill="#dc72f2" font-size="16">3.786</text>
<text x="847" y="367" fill="#dc72f2" font-size="16">GHz</text>
<text x="986.5" y="367" fill="#dc72f2" font-size="16" text-anchor="end">-1.06 dB</text>
<text x="746" y="387" fill="#dc72f2" font-size="16">3:</text>
<text x="799" y="387" fill="#dc72f2" font-size="16">3.836</text>
<text x="847" y="387" fill="#dc72f2" font-size="16">GHz</text>
<text x="986.5" y="387" fill="#dc72f2" font-size="16" text-anchor="end">-0.92 dB</text>
<text x="746" y="407" fill="#dc72f2" font-size="16">8:</text>
<text x="799" y="407" fill="#dc72f2" font-size="16">3.815</text>
<text x="847" y="407" fill="#dc72f2" font-size="16">GHz</text>
<text x="986.5" y="407" fill="#dc72f2" font-size="16" text-anchor="end">-0.85 dB</text>
<text x="746" y="427" fill="#44fa44" font-size="16">1:</text>
<text x="799" y="427" fill="#44fa44" font-size="16">3.811</text>
<text x="847" y="427" fill="#44fa44" font-size="16">GHz</text>
<text x="986.5" y="427" fill="#44fa44" font-size="16" text-anchor="end">-26.96 dB</text>
<text x="746" y="447" fill="#44fa44" font-size="16">2:</text>
<text x="799" y="447" fill="#44fa44" font-size="16">3.786</text>
<text x="847" y="447" fill="#44fa44" font-size="16">GHz</text>
<text x="986.5" y="447" fill="#44fa44" font-size="16" text-anchor="end">-28.69 dB</text>
<text x="746" y="467" fill="#44fa44" font-size="16">3:</text>
<text x="799" y="467" fill="#44fa44" font-size="16">3.836</text>
<text x="847" y="467" fill="#44fa44" font-size="16">GHz</text>
<text x="986.5" y="467" fill="#44fa44" font-size="16" text-anchor="end">-25.42 dB</text>
<text x="746" y="487" fill="#44fa44" font-size="16">8:</text>
<text x="799" y="487" fill="#44fa44" font-size="16">3.821</text>
<text x="847" y="487" fill="#44fa44" font-size="16">GHz</text>
<text x="986.5" y="487" fill="#44fa44" font-size="16" text-anchor="end">-24.87 dB</text>
<text x="69" y="149" fill="#000" font-size="16" text-anchor="end">0</text>
<text x="69" y="197.8" fill="#000" font-size="16" text-anchor="end">-10</text>
<text x="69" y="256.1" fill="#000" font-size="16" text-anchor="end">-20</text>
<text x="69" y="314.4" fill="#000" font-size="16" text-anchor="end">-30</text>
<text x="69" y="372.7" fill="#000" font-size="16" text-anchor="end">-40</text>
<text x="69" y="431.0" fill="#000" font-size="16" text-anchor="end">-50</text>
<text x="69" y="489.3" fill="#000" font-size="16" text-anchor="end">-60</text>
<text x="69" y="547.6" fill="#000" font-size="16" text-anchor="end">-70</text>
<text x="69" y="605.9" fill="#000" font-size="16" text-anchor="end">-80</text>
<text x="69" y="664.2" fill="#000" font-size="16" text-anchor="end">-90</text>
<text x="69" y="711" fill="#000" font-size="16" text-anchor="end">-100</text>
<rect x="553" y="85" width="33" height="19.5" fill="#00a8a8"/>
<text x="87" y="101" fill="#b5740f" font-size="16" xml:space="preserve" style="white-space:pre">Tr</text>
<text x="109.5" y="101" fill="#b5740f" font-size="16" xml:space="preserve" style="white-space:pre">1</text>
<text x="129.5" y="101" fill="#b5740f" font-size="16" xml:space="preserve" style="white-space:pre">S11 LogM 5.000dB/  0.00dB</text>
<text x="87" y="127" fill="#dc72f2" font-size="16" xml:space="preserve" style="white-space:pre">Tr</text>
<text x="109.5" y="127" fill="#dc72f2" font-size="16" xml:space="preserve" style="white-space:pre">3</text>
<text x="129.5" y="127" fill="#dc72f2" font-size="16" xml:space="preserve" style="white-space:pre">S12 LogM 0.120dB/  -1.32dB</text>
<text x="554" y="101" fill="#000" font-size="16" xml:space="preserve" style="white-space:pre">Tr</text>
<text x="575" y="101" fill="#000" font-size="16" xml:space="preserve" style="white-space:pre">2</text>
<text x="596.5" y="101" fill="#0eabba" font-size="16" xml:space="preserve" style="white-space:pre">S21 LogM 10.00dB/  0.00dB</text>
<text x="554" y="127" fill="#44fa44" font-size="16" xml:space="preserve" style="white-space:pre">Tr</text>
<text x="575" y="127" fill="#44fa44" font-size="16" xml:space="preserve" style="white-space:pre">4</text>
<text x="596.5" y="127" fill="#44fa44" font-size="16" xml:space="preserve" style="white-space:pre">S22 LogM 5.000dB/  0.00dB</text>
<rect x="16" y="723" width="27" height="20" fill="#c8c8c8"/>
<text x="29.5" y="739" fill="#000" font-size="16" text-anchor="middle">1</text>
<text x="87" y="742" fill="#000" font-size="16">&gt;Ch1:</text>
<text x="136.5" y="742" fill="#000" font-size="16">Start</text>
<text x="184" y="742" fill="#000" font-size="16">3.65100 GHz</text>
<rect x="285.0" y="734" width="22" height="2" fill="#b5740f"/>
<rect x="311.7" y="734" width="22" height="2" fill="#0eabba"/>
<rect x="338.4" y="734" width="22" height="2" fill="#dc72f2"/>
<rect x="365.1" y="734" width="22" height="2" fill="#44fa44"/>
<text x="507" y="742" fill="#000" font-size="16" xml:space="preserve" style="white-space:pre">RF    0.00 dBm</text>
<text x="1008" y="742" fill="#000" font-size="16" text-anchor="end" xml:space="preserve" style="white-space:pre">Stop  3.97100 GHz</text>
</svg>
<div class="sb" style="left:4px;width:46px;white-space:pre">Tr 2</div>
<div class="sb" style="left:55.5px;width:51.5px;white-space:pre">Ch 1</div>
<div class="sb" style="left:113px;width:59px;white-space:pre">IntTrig</div>
<div class="sb" style="left:178px;width:51px;white-space:pre">Swp</div>
<div class="sb" style="left:235px;width:75px;white-space:pre">BW=1k</div>
<div class="sb" style="left:316px;width:81px;white-space:pre">C  2-Port</div>
<div class="sb dis" style="left:403px;width:51.5px;white-space:pre">SrcCal</div>
<div class="sb dis" style="left:459.5px;width:37.5px;white-space:pre">Fix</div>
<div class="sb dis" style="left:503px;width:47px;white-space:pre">Pulse</div>
<div class="sb" style="left:556px;width:719px;white-space:pre"></div>
<div class="abs" style="left:0;top:776px;width:1280px;height:1px;background:#bcbcbc"></div>
<div class="abs" style="left:0;top:797px;width:1280px;height:1px;background:#b8b8b8"></div>
<div class="abs" style="left:0;top:798px;width:1280px;height:2px;background:#e2e2e2"></div>
<div class="abs" style="left:0;top:800px;width:1280px;height:1px;background:#000"></div>
<div id="panel" class="abs">
<div id="phead"><div class="abs" style="left:13px;top:10px;font-size:16px;color:#fff;line-height:19px">Avg BW</div><div class="abs" style="left:215px;top:7px;width:25px;height:24px;border:1px solid #a6aebb;border-radius:5px;background:#13283a;overflow:hidden"><div class="abs" style="left:2px;top:2px;width:19px;height:18px;border-radius:2px;background:radial-gradient(ellipse at 50% 100%,#4a9a8a 0,#2f6d6c 60%,#285a62 100%)"></div><div class="abs" style="left:2px;top:2px;width:19px;height:6px;background:#8fa3ad"></div><svg width="23" height="22" viewBox="0 0 23 22" style="position:absolute;left:0;top:0"><path d="M7.5 7.5L15.5 15.5M15.5 7.5L7.5 15.5" stroke="#fff" stroke-width="2.8"/></svg></div></div>
<div id="pleft">
<div class="pb" style="top:8px;width:37px"><div class="abs" style="left:8px;top:31px;width:21px;height:11px;border-radius:3px;background:linear-gradient(#909094,#767678);border:1px solid #5a5a5e"></div></div>
<div class="pb" style="top:8px;left:48px;width:106px"><div class="abs" style="left:0;top:9px;width:106px">Averaging</div><div class="fld" style="top:42px;left:7px;width:92px">1</div></div>
<div class="pb" style="top:91px"><div class="abs" style="left:0;top:17px;width:149px">Averaging<br>Restart</div></div>
<div class="pb" style="top:174px"><div class="abs" style="left:0;top:9px;width:149px">Average Type</div><div class="fld" style="top:43px;width:135px;padding:0"><span class="abs" style="left:0;top:0;width:67px;color:#a0a0a0;background:#dcdcde">point</span><span class="abs" style="left:67px;top:0;width:67px;background:#e6e6e8">SWEEP</span></div></div>
<div class="pe" style="top:257px"></div>
<div class="pb" style="top:340px"><div class="abs" style="left:0;top:9px;width:149px">IF Bandwidth</div><div class="fld" style="top:43px">1 kHz</div></div>
<div class="pb" style="top:423px"><div class="abs" style="left:0;top:9px;width:133px">IF BW Shape</div><div class="abs" style="left:130px;top:11px;font-size:11px;color:#555">&#9660;</div><div class="fld" style="top:43px">Standard</div></div>
<div class="pb" style="top:507px"><div class="abs" style="left:0;top:9px;width:149px">LF Auto BW</div><div class="fld" style="top:43px;padding:0"><span class="abs" style="left:0;top:0;width:67px;background:#e4e4e6">ON</span><span class="abs" style="left:67px;top:0;width:67px;color:#a0a0a0;background:#dcdcde">off</span></div></div>
<div class="pe" style="top:589px"></div>
</div>
<div class="abs" style="left:159px;top:39px;width:90px;height:66px;background:#808089"></div>
<div class="tab" style="top:62px">Main</div>
<div class="abs" style="left:159px;top:104px;width:90px;height:65px;background:#5c5c5c;border:1px solid #3c3c3c;border-top-left-radius:6px"></div>
<div class="tab" style="top:126px">Smoothing</div>
<div class="abs" style="left:159px;top:168px;width:90px;height:64px;background:#5c5c5c;border:1px solid #3c3c3c"></div>
<div class="tab" style="top:179px">Delay<br>Aperture</div>
</div>
<div class="abs" style="left:163px;top:297px;width:960px;height:80px;font-family:'Liberation Serif',serif;font-weight:bold;font-size:72px;line-height:80px;color:#e2e2e2;-webkit-text-stroke:1.2px #e2e2e2;mix-blend-mode:multiply;white-space:pre"><span style="position:absolute;left:-0.2px;top:0">w</span><span style="position:absolute;left:57.6px;top:0">w</span><span style="position:absolute;left:116.4px;top:0">w</span><span style="position:absolute;left:179.5px;top:0">.</span><span style="position:absolute;left:202.6px;top:0">x</span><span style="position:absolute;left:247.0px;top:0">a</span><span style="position:absolute;left:288.7px;top:0">h</span><span style="position:absolute;left:334.0px;top:0">x</span><span style="position:absolute;left:381.0px;top:0">m</span><span style="position:absolute;left:442.6px;top:0">i</span><span style="position:absolute;left:471.6px;top:0">c</span><span style="position:absolute;left:499.0px;top:0">r</span><span style="position:absolute;left:545.9px;top:0">o</span><span style="position:absolute;left:573.0px;top:0">w</span><span style="position:absolute;left:632.8px;top:0">a</span><span style="position:absolute;left:679.0px;top:0">v</span><span style="position:absolute;left:733.0px;top:0">e</span><span style="position:absolute;left:767.0px;top:0">.</span><span style="position:absolute;left:790.8px;top:0">c</span><span style="position:absolute;left:837.6px;top:0">o</span><span style="position:absolute;left:868.0px;top:0">m</span></div>
</body></html>
